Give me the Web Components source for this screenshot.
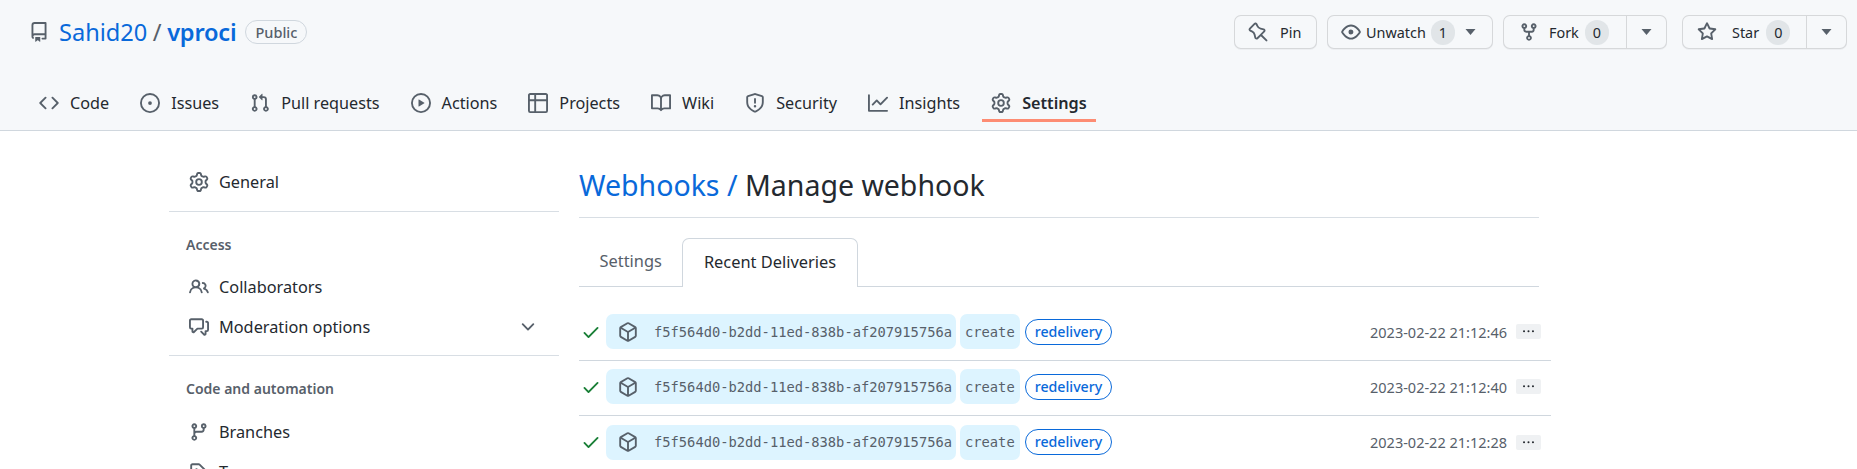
<!DOCTYPE html>
<html>
<head>
<meta charset="utf-8">
<title>Manage webhook</title>
<style>
  html, body { margin: 0; height: 469px; overflow: hidden; background: #fff; }
  body { font-family: "Noto Sans", "Open Sans", sans-serif; color: #24292f; }
</style>
</head>
<body>
<repo-header></repo-header>
<settings-page>
  <side-nav slot="side"></side-nav>
  <webhook-panel slot="main"></webhook-panel>
</settings-page>

<script>
(function() {
  const ICONS = {
    repo: 'M2 2.5A2.5 2.5 0 0 1 4.5 0h8.75a.75.75 0 0 1 .75.75v12.5a.75.75 0 0 1-.75.75h-2.5a.75.75 0 0 1 0-1.5h1.75v-2h-8a1 1 0 0 0-.714 1.7.75.75 0 1 1-1.072 1.05A2.495 2.495 0 0 1 2 11.5Zm10.5-1h-8a1 1 0 0 0-1 1v6.708A2.486 2.486 0 0 1 4.5 9h8ZM5 12.25a.25.25 0 0 1 .25-.25h3.5a.25.25 0 0 1 .25.25v3.25a.25.25 0 0 1-.4.2l-1.45-1.087a.249.249 0 0 0-.3 0L5.4 15.7a.25.25 0 0 1-.4-.2Z',
    code: 'm11.28 3.22 4.25 4.25a.75.75 0 0 1 0 1.06l-4.25 4.25a.749.749 0 0 1-1.275-.326.749.749 0 0 1 .215-.734L13.94 8l-3.72-3.72a.749.749 0 0 1 .326-1.275.749.749 0 0 1 .734.215Zm-6.56 0a.751.751 0 0 1 1.042.018.751.751 0 0 1 .018 1.042L2.06 8l3.72 3.72a.749.749 0 0 1-.326 1.275.749.749 0 0 1-.734-.215L.47 8.53a.75.75 0 0 1 0-1.06Z',
    issue: 'M8 9.5a1.5 1.5 0 1 0 0-3 1.5 1.5 0 0 0 0 3ZM8 0a8 8 0 1 1 0 16A8 8 0 0 1 8 0ZM1.5 8a6.5 6.5 0 1 0 13 0 6.5 6.5 0 0 0-13 0Z',
    pull: 'M1.5 3.25a2.25 2.25 0 1 1 3 2.122v5.256a2.251 2.251 0 1 1-1.5 0V5.372A2.25 2.25 0 0 1 1.5 3.25Zm5.677-.177L9.573.677A.25.25 0 0 1 10 .854V2.5h1A2.5 2.5 0 0 1 13.5 5v5.628a2.251 2.251 0 1 1-1.5 0V5a1 1 0 0 0-1-1h-1v1.646a.25.25 0 0 1-.427.177L7.177 3.427a.25.25 0 0 1 0-.354ZM3.75 2.5a.75.75 0 1 0 0 1.5.75.75 0 0 0 0-1.5Zm0 9.5a.75.75 0 1 0 0 1.5.75.75 0 0 0 0-1.5Zm8.25.75a.75.75 0 1 0 1.5 0 .75.75 0 0 0-1.5 0Z',
    play: 'M8 0a8 8 0 1 1 0 16A8 8 0 0 1 8 0ZM1.5 8a6.5 6.5 0 1 0 13 0 6.5 6.5 0 0 0-13 0Zm4.879-2.773 4.264 2.559a.25.25 0 0 1 0 .428l-4.264 2.559A.25.25 0 0 1 6 10.559V5.442a.25.25 0 0 1 .379-.215Z',
    table: 'M0 1.75C0 .784.784 0 1.75 0h12.5C15.216 0 16 .784 16 1.75v12.5A1.75 1.75 0 0 1 14.25 16H1.75A1.75 1.75 0 0 1 0 14.25ZM6.5 6.5v8h7.75a.25.25 0 0 0 .25-.25V6.5Zm8-1.5V1.75a.25.25 0 0 0-.25-.25H6.5V5Zm-13 1.5v7.75c0 .138.112.25.25.25H5v-8ZM5 5V1.5H1.75a.25.25 0 0 0-.25.25V5Z',
    book: 'M0 1.75A.75.75 0 0 1 .75 1h4.253c1.227 0 2.317.59 3 1.501A3.743 3.743 0 0 1 11.006 1h4.245a.75.75 0 0 1 .75.75v10.5a.75.75 0 0 1-.75.75h-4.507a2.25 2.25 0 0 0-1.591.659l-.622.621a.75.75 0 0 1-1.06 0l-.622-.621A2.25 2.25 0 0 0 5.258 13H.75a.75.75 0 0 1-.75-.75Zm7.251 10.324.004-5.073-.002-2.253A2.25 2.25 0 0 0 5.003 2.5H1.5v9h3.757a3.75 3.75 0 0 1 1.994.574ZM8.755 4.75l-.004 7.322a3.752 3.752 0 0 1 1.992-.572H14.5v-9h-3.495a2.25 2.25 0 0 0-2.25 2.25Z',
    shield: 'M7.467.133a1.748 1.748 0 0 1 1.066 0l5.25 1.68A1.75 1.75 0 0 1 15 3.48V7c0 1.566-.32 3.182-1.303 4.682-.983 1.498-2.585 2.813-5.032 3.855a1.697 1.697 0 0 1-1.33 0c-2.447-1.042-4.049-2.357-5.032-3.855C1.32 10.182 1 8.566 1 7V3.48a1.75 1.75 0 0 1 1.217-1.667Zm.61 1.429a.25.25 0 0 0-.153 0l-5.25 1.68a.25.25 0 0 0-.174.238V7c0 1.358.275 2.666 1.057 3.86.784 1.194 2.121 2.34 4.366 3.297a.196.196 0 0 0 .154 0c2.245-.956 3.582-2.104 4.366-3.298C13.225 9.666 13.5 8.36 13.5 7V3.48a.251.251 0 0 0-.174-.237l-5.25-1.68ZM8.75 4.75v3a.75.75 0 0 1-1.5 0v-3a.75.75 0 0 1 1.5 0ZM9 10.5a1 1 0 1 1-2 0 1 1 0 0 1 2 0Z',
    graph: 'M1.5 1.75V13.5h13.75a.75.75 0 0 1 0 1.5H.75a.75.75 0 0 1-.75-.75V1.75a.75.75 0 0 1 1.5 0Zm14.28 2.53-5.25 5.25a.75.75 0 0 1-1.06 0L7 7.06 4.28 9.78a.751.751 0 0 1-1.042-.018.751.751 0 0 1-.018-1.042l3.25-3.25a.75.75 0 0 1 1.06 0L10 7.94l4.72-4.72a.751.751 0 0 1 1.042.018.751.751 0 0 1 .018 1.042Z',
    gear: 'M8 0a8.2 8.2 0 0 1 .701.031C9.444.095 9.99.645 10.16 1.29l.288 1.107c.018.066.079.158.212.224.231.114.454.243.668.386.123.082.233.09.299.071l1.103-.303c.644-.176 1.392.021 1.82.63.27.385.506.792.704 1.218.315.675.111 1.422-.364 1.891l-.814.806c-.049.048-.098.147-.088.294.016.257.016.515 0 .772-.01.147.038.246.088.294l.814.806c.475.469.679 1.216.364 1.891a7.977 7.977 0 0 1-.704 1.217c-.428.61-1.176.807-1.82.63l-1.102-.302c-.067-.019-.177-.011-.3.071a5.909 5.909 0 0 1-.668.386c-.133.066-.194.158-.211.224l-.29 1.106c-.168.646-.715 1.196-1.458 1.26a8.006 8.006 0 0 1-1.402 0c-.743-.064-1.289-.614-1.458-1.26l-.289-1.106c-.018-.066-.079-.158-.212-.224a5.738 5.738 0 0 1-.668-.386c-.123-.082-.233-.09-.299-.071l-1.103.303c-.644.176-1.392-.021-1.82-.63a8.12 8.12 0 0 1-.704-1.218c-.315-.675-.111-1.422.363-1.891l.815-.806c.05-.048.098-.147.088-.294a6.214 6.214 0 0 1 0-.772c.01-.147-.038-.246-.088-.294l-.815-.806C.635 6.045.431 5.298.746 4.623a7.92 7.92 0 0 1 .704-1.217c.428-.61 1.176-.807 1.82-.63l1.102.302c.067.019.177.011.3-.071.214-.143.437-.272.668-.386.133-.066.194-.158.211-.224l.29-1.106C6.009.645 6.556.095 7.299.03 7.53.01 7.764 0 8 0Zm-.571 1.525c-.036.003-.108.036-.137.146l-.289 1.105c-.147.561-.549.967-.998 1.189-.173.086-.34.183-.5.29-.417.278-.97.423-1.529.27l-1.103-.303c-.109-.03-.175.016-.195.045-.22.312-.412.644-.573.99-.014.031-.021.11.059.19l.815.806c.411.406.562.957.53 1.456a4.709 4.709 0 0 0 0 .582c.032.499-.119 1.05-.53 1.456l-.815.806c-.081.08-.073.159-.059.19.162.346.353.677.573.989.02.03.085.076.195.046l1.102-.303c.56-.153 1.113-.008 1.53.27.161.107.328.204.501.29.447.222.85.629.997 1.189l.289 1.105c.029.109.101.143.137.146a6.6 6.6 0 0 0 1.142 0c.036-.003.108-.036.137-.146l.289-1.105c.147-.561.549-.967.998-1.189.173-.086.34-.183.5-.29.417-.278.97-.423 1.529-.27l1.103.303c.109.029.175-.016.195-.045.22-.313.411-.644.573-.99.014-.031.021-.11-.059-.19l-.815-.806c-.411-.406-.562-.957-.53-1.456a4.709 4.709 0 0 0 0-.582c-.032-.499.119-1.05.53-1.456l.815-.806c.081-.08.073-.159.059-.19a6.464 6.464 0 0 0-.573-.989c-.02-.03-.085-.076-.195-.046l-1.102.303c-.56.153-1.113.008-1.53-.27a4.44 4.44 0 0 0-.501-.29c-.447-.222-.85-.629-.997-1.189l-.289-1.105c-.029-.11-.101-.143-.137-.146a6.6 6.6 0 0 0-1.142 0ZM11 8a3 3 0 1 1-6 0 3 3 0 0 1 6 0ZM9.5 8a1.5 1.5 0 1 0-3.001.001A1.5 1.5 0 0 0 9.5 8Z',
    pin: 'm11.294.984 3.722 3.722a1.75 1.75 0 0 1-.504 2.826l-1.327.613a3.089 3.089 0 0 0-1.707 2.084l-.584 2.454c-.317 1.332-1.972 1.8-2.94.832L5.75 11.311 1.78 15.28a.749.749 0 0 1-1.275-.326.749.749 0 0 1 .215-.734l3.97-3.97-2.204-2.204c-.968-.968-.5-2.623.832-2.94l2.454-.584a3.08 3.08 0 0 0 2.084-1.707l.613-1.327a1.75 1.75 0 0 1 2.826-.504ZM6.283 9.723l2.732 2.731a.25.25 0 0 0 .42-.119l.584-2.454a4.586 4.586 0 0 1 2.537-3.098l1.328-.613a.25.25 0 0 0 .072-.404l-3.722-3.722a.25.25 0 0 0-.404.072l-.613 1.328a4.584 4.584 0 0 1-3.098 2.537l-2.454.584a.25.25 0 0 0-.119.42l2.731 2.732Z',
    eye: 'M8 2c1.981 0 3.671.992 4.933 2.078 1.27 1.091 2.187 2.345 2.637 3.023a1.62 1.62 0 0 1 0 1.798c-.45.678-1.367 1.932-2.637 3.023C11.67 13.008 9.981 14 8 14c-1.981 0-3.671-.992-4.933-2.078C1.797 10.83.88 9.576.43 8.898a1.62 1.62 0 0 1 0-1.798c.45-.677 1.367-1.931 2.637-3.022C4.33 2.992 6.019 2 8 2ZM1.679 7.932a.12.12 0 0 0 0 .136c.411.622 1.241 1.75 2.366 2.717C5.176 11.758 6.527 12.5 8 12.5c1.473 0 2.825-.742 3.955-1.715 1.124-.967 1.954-2.096 2.366-2.717a.12.12 0 0 0 0-.136c-.412-.621-1.242-1.75-2.366-2.717C10.824 4.242 9.473 3.5 8 3.5c-1.473 0-2.825.742-3.955 1.715-1.124.967-1.954 2.096-2.366 2.717ZM8 10a2 2 0 1 1-.001-3.999A2 2 0 0 1 8 10Z',
    fork: 'M5 5.372v.878c0 .414.336.75.75.75h4.5a.75.75 0 0 0 .75-.75v-.878a2.25 2.25 0 1 1 1.5 0v.878a2.25 2.25 0 0 1-2.25 2.25h-1.5v2.128a2.251 2.251 0 1 1-1.5 0V8.5h-1.5A2.25 2.25 0 0 1 3.5 6.25v-.878a2.25 2.25 0 1 1 1.5 0ZM5 3.25a.75.75 0 1 0-1.5 0 .75.75 0 0 0 1.5 0Zm6.75.75a.75.75 0 1 0 0-1.5.75.75 0 0 0 0 1.5Zm-3 8.75a.75.75 0 1 0-1.5 0 .75.75 0 0 0 1.5 0Z',
    star: 'M8 .25a.75.75 0 0 1 .673.418l1.882 3.815 4.21.612a.75.75 0 0 1 .416 1.279l-3.046 2.97.719 4.192a.751.751 0 0 1-1.088.791L8 12.347l-3.766 1.98a.75.75 0 0 1-1.088-.79l.72-4.194L.818 6.374a.75.75 0 0 1 .416-1.28l4.21-.611L7.327.668A.75.75 0 0 1 8 .25Zm0 2.445L6.615 5.5a.75.75 0 0 1-.564.41l-3.097.45 2.24 2.184a.75.75 0 0 1 .216.664l-.528 3.084 2.769-1.456a.75.75 0 0 1 .698 0l2.77 1.456-.53-3.084a.75.75 0 0 1 .216-.664l2.24-2.183-3.096-.45a.75.75 0 0 1-.564-.41L8 2.694Z',
    people: 'M2 5.5a3.5 3.5 0 1 1 5.898 2.549 5.508 5.508 0 0 1 3.034 4.084.75.75 0 1 1-1.482.235 4 4 0 0 0-7.9 0 .75.75 0 0 1-1.482-.236A5.507 5.507 0 0 1 3.102 8.05 3.493 3.493 0 0 1 2 5.5ZM11 4a3.001 3.001 0 0 1 2.22 5.018 5.01 5.01 0 0 1 2.56 3.012.749.749 0 0 1-.885.954.752.752 0 0 1-.549-.514 3.507 3.507 0 0 0-2.522-2.372.75.75 0 0 1-.574-.73v-.352a.75.75 0 0 1 .416-.672A1.5 1.5 0 0 0 11 5.5.75.75 0 0 1 11 4Zm-5.5-.5a2 2 0 1 0-.001 3.999A2 2 0 0 0 5.5 3.5Z',
    comments: 'M1.75 1h8.5c.966 0 1.75.784 1.75 1.75v5.5A1.75 1.75 0 0 1 10.25 10H7.061l-2.574 2.573A1.458 1.458 0 0 1 2 11.543V10h-.25A1.75 1.75 0 0 1 0 8.25v-5.5C0 1.784.784 1 1.75 1ZM1.5 2.75v5.5c0 .138.112.25.25.25h1a.75.75 0 0 1 .75.75v2.19l2.72-2.72a.749.749 0 0 1 .53-.22h3.5a.25.25 0 0 0 .25-.25v-5.5a.25.25 0 0 0-.25-.25h-8.5a.25.25 0 0 0-.25.25Zm13 2a.25.25 0 0 0-.25-.25h-.5a.75.75 0 0 1 0-1.5h.5c.966 0 1.75.784 1.75 1.75v5.5A1.75 1.75 0 0 1 14.25 12H14v1.543a1.458 1.458 0 0 1-2.487 1.03L9.22 12.28a.749.749 0 0 1 .326-1.275.749.749 0 0 1 .734.215l2.22 2.22v-2.19a.75.75 0 0 1 .75-.75h1a.25.25 0 0 0 .25-.25Z',
    chevron: 'M12.78 5.22a.749.749 0 0 1 0 1.06l-4.25 4.25a.749.749 0 0 1-1.06 0L3.22 6.28a.749.749 0 1 1 1.06-1.06L8 8.939l3.72-3.719a.749.749 0 0 1 1.06 0Z',
    branch: 'M9.5 3.25a2.25 2.25 0 1 1 3 2.122V6A2.5 2.5 0 0 1 10 8.5H6a1 1 0 0 0-1 1v1.128a2.251 2.251 0 1 1-1.5 0V5.372a2.251 2.251 0 1 1 1.5 0v1.836A2.493 2.493 0 0 1 6 7h4a1 1 0 0 0 1-1v-.628A2.25 2.25 0 0 1 9.5 3.25Zm-6 0a.75.75 0 1 0 1.5 0 .75.75 0 0 0-1.5 0Zm8.25-.75a.75.75 0 1 0 0 1.5.75.75 0 0 0 0-1.5ZM4.25 12a.75.75 0 1 0 0 1.5.75.75 0 0 0 0-1.5Z',
    tag: 'M1 7.775V2.75C1 1.784 1.784 1 2.75 1h5.025c.464 0 .91.184 1.238.513l6.25 6.25a1.75 1.75 0 0 1 0 2.474l-5.026 5.026a1.75 1.75 0 0 1-2.474 0l-6.25-6.25A1.752 1.752 0 0 1 1 7.775Zm1.5 0c0 .066.026.13.073.177l6.25 6.25a.25.25 0 0 0 .354 0l5.025-5.025a.25.25 0 0 0 0-.354l-6.25-6.25a.25.25 0 0 0-.177-.073H2.75a.25.25 0 0 0-.25.25ZM6 5a1 1 0 1 1 0 2 1 1 0 0 1 0-2Z',
    check: 'M13.78 4.22a.75.75 0 0 1 0 1.06l-7.25 7.25a.75.75 0 0 1-1.06 0L2.22 9.28a.751.751 0 0 1 .018-1.042.751.751 0 0 1 1.042-.018L6 10.94l6.72-6.72a.75.75 0 0 1 1.06 0Z',
    box: 'm8.878.392 5.25 3.045c.54.314.872.89.872 1.514v6.098a1.75 1.75 0 0 1-.872 1.514l-5.25 3.045a1.75 1.75 0 0 1-1.756 0l-5.25-3.045A1.75 1.75 0 0 1 1 11.049V4.951c0-.624.332-1.201.872-1.514L7.122.392a1.75 1.75 0 0 1 1.756 0ZM7.875 1.69l-4.63 2.685L8 7.133l4.755-2.758-4.63-2.685a.248.248 0 0 0-.25 0ZM2.5 5.677v5.372c0 .09.047.171.125.216l4.625 2.683V8.432Zm6.25 8.271 4.625-2.683a.25.25 0 0 0 .125-.216V5.677L8.75 8.432Z',
    kebab: 'M8 9a1.5 1.5 0 1 0 0-3 1.5 1.5 0 0 0 0 3ZM1.5 9a1.5 1.5 0 1 0 0-3 1.5 1.5 0 0 0 0 3Zm13 0a1.5 1.5 0 1 0 0-3 1.5 1.5 0 0 0 0 3Z'
  };

  class GhIcon extends HTMLElement {
    connectedCallback() {
      const size = this.getAttribute('size') || 20;
      const flip = this.hasAttribute('flip') ? 'transform:scaleX(-1);' : '';
      this.attachShadow({ mode: 'open' }).innerHTML = `
        <style>:host { display: inline-flex; flex: none; color: var(--icon-color, #57606a); }</style>
        <svg width="${size}" height="${size}" viewBox="0 0 16 16" fill="currentColor" style="${flip}">
          <path fill-rule="evenodd" d="${ICONS[this.getAttribute('name')]}"></path>
        </svg>`;
    }
  }
  customElements.define('gh-icon', GhIcon);

  // Small down triangle used in the header buttons
  const CARET = `<svg width="11" height="6" viewBox="0 0 10 6" fill="#57606a"><path d="M0 0h10L5 6z"/></svg>`;

  class GhButton extends HTMLElement {
    connectedCallback() {
      const icon = this.getAttribute('icon');
      const label = this.getAttribute('label');
      const count = this.getAttribute('count');
      const caret = this.getAttribute('caret');
      const flip = this.hasAttribute('flip') ? 'flip' : '';
      this.attachShadow({ mode: 'open' }).innerHTML = `
        <style>
          :host { display: flex; height: 34px; box-sizing: border-box; border: 1px solid rgba(31,35,40,.15);
            border-radius: 7px; background: #f6f8fa; font-size: 14.4px; color: #24292f; box-shadow: 0 1px 0 rgba(31,35,40,.04); }
          .main { display: flex; align-items: center; flex: 1; padding: 0 var(--pad-r, 14px) 0 var(--pad-l, 14px); gap: var(--gap, 14px); }
          .count { background: rgba(175,184,193,.3); border-radius: 14px; padding: 0 8px; height: 25px; line-height: 25px; font-size: 14.4px; margin-left: var(--count-ml, -7px); }
          .caret { display: flex; align-items: center; justify-content: center; width: 39px; border-left: 1px solid rgba(31,35,40,.15); }
          .inline { margin-left: 5px; display: flex; }
        </style>
        <div class="main">
          <gh-icon name="${icon}" ${flip}></gh-icon>
          <span>${label}</span>
          ${count ? `<span class="count">${count}</span>` : ''}
          ${caret === 'inline' ? `<span class="inline">${CARET}</span>` : ''}
        </div>
        ${caret === 'split' ? `<div class="caret">${CARET}</div>` : ''}`;
    }
  }
  customElements.define('gh-button', GhButton);

  class NavTab extends HTMLElement {
    connectedCallback() {
      const selected = this.hasAttribute('selected');
      this.attachShadow({ mode: 'open' }).innerHTML = `
        <style>
          :host { display: flex; align-items: center; gap: 11px; padding: 3px 9px 0; height: 39px; position: relative;
            font-size: 16.2px; color: #24292f; margin-bottom: -1px; box-sizing: border-box;
            border-bottom: 3px solid ${selected ? '#fd8c73' : 'transparent'}; font-weight: ${selected ? 600 : 400}; }
        </style>
        <gh-icon name="${this.getAttribute('icon')}"></gh-icon>
        <span>${this.getAttribute('label')}</span>`;
    }
  }
  customElements.define('nav-tab', NavTab);

  const headTmpl = document.createElement('template');
  headTmpl.innerHTML = `
    <style>
      :host { display: block; height: 131px; box-sizing: border-box; background: #f6f8fa; border-bottom: 1px solid #d0d7de; }
      .top { display: flex; align-items: center; justify-content: space-between; padding: 15px 10px 0 29px; height: 34px; }
      .title { display: flex; align-items: center; font-size: 23.6px; color: #0969da; }
      .title gh-icon { margin-right: 10px; }
      .sep { color: #57606a; margin: 0 5.5px; }
      .name { font-weight: 600; letter-spacing: -.2px; }
      .badge { margin-left: 9px; font-size: 14.5px; font-weight: 500; color: #57606a; border: 1px solid #d0d7de; border-radius: 14px; padding: 0 9px; height: 24px; line-height: 22px; box-sizing: border-box; }
      .actions { display: flex; }
      .tabs { display: flex; gap: 13.1px; padding: 34px 0 0 30px; }
      #pin { width: 83px; margin-right: 10px; --gap: 12px; --pad-l: 13px; }
      #watch { width: 166px; margin-right: 10px; --gap: 5px; --pad-l: 13px; --pad-r: 12px; --count-ml: 0px; }
      #fork { width: 164px; margin-right: 15px; --gap: 10px; --pad-l: 15px; --count-ml: -4px; }
      #star { width: 165px; --gap: 15px; --pad-l: 14px; --count-ml: -8px; }
    </style>
    <div class="top">
      <div class="title">
        <gh-icon name="repo"></gh-icon>
        <span>Sahid20</span><span class="sep">/</span><span class="name">vproci</span>
        <span class="badge">Public</span>
      </div>
      <div class="actions">
        <gh-button id="pin" icon="pin" label="Pin" flip></gh-button>
        <gh-button id="watch" icon="eye" label="Unwatch" count="1" caret="inline"></gh-button>
        <gh-button id="fork" icon="fork" label="Fork" count="0" caret="split"></gh-button>
        <gh-button id="star" icon="star" label="Star" count="0" caret="split"></gh-button>
      </div>
    </div>
    <nav class="tabs">
      <nav-tab icon="code" label="Code"></nav-tab>
      <nav-tab icon="issue" label="Issues"></nav-tab>
      <nav-tab icon="pull" label="Pull requests"></nav-tab>
      <nav-tab icon="play" label="Actions"></nav-tab>
      <nav-tab icon="table" label="Projects"></nav-tab>
      <nav-tab icon="book" label="Wiki"></nav-tab>
      <nav-tab icon="shield" label="Security"></nav-tab>
      <nav-tab icon="graph" label="Insights"></nav-tab>
      <nav-tab icon="gear" label="Settings" selected></nav-tab>
    </nav>`;

  class RepoHeader extends HTMLElement {
    constructor() {
      super();
      this.attachShadow({ mode: 'open' }).appendChild(headTmpl.content.cloneNode(true));
    }
  }
  customElements.define('repo-header', RepoHeader);

  class SettingsPage extends HTMLElement {
    constructor() {
      super();
      this.attachShadow({ mode: 'open' }).innerHTML = `
        <style>
          :host { display: flex; gap: 20px; padding: 0 0 0 169px; }
          .side { width: 390px; flex: none; padding-top: 31px; }
          .main { width: 960px; flex: none; padding-top: 35px; }
        </style>
        <div class="side"><slot name="side"></slot></div>
        <div class="main"><slot name="main"></slot></div>`;
    }
  }
  customElements.define('settings-page', SettingsPage);

  class SideItem extends HTMLElement {
    connectedCallback() {
      this.attachShadow({ mode: 'open' }).innerHTML = `
        <style>
          :host { display: flex; align-items: center; gap: 10px; height: 40px; padding-left: 20px; padding-right: 21px;
            font-size: 16.3px; color: #24292f; }
          .label { flex: 1; }
        </style>
        <gh-icon name="${this.getAttribute('icon')}"></gh-icon>
        <span class="label">${this.getAttribute('label')}</span>
        ${this.hasAttribute('expand') ? '<gh-icon name="chevron"></gh-icon>' : ''}`;
    }
  }
  customElements.define('side-item', SideItem);

  const sideTmpl = document.createElement('template');
  sideTmpl.innerHTML = `
    <style>
      :host { display: block; }
      hr { border: 0; height: 1px; background: #d8dee4; margin: 0; }
      .head { font-size: 14px; font-weight: 600; color: #57606a; padding-left: 17px; line-height: 20px; }
      .general { margin-bottom: 9px; }
      .mod { margin-bottom: 8px; }
      .access { margin: 23px 0 12px; }
      .auto { margin: 23px 0 13px; }
    </style>
    <side-item class="general" icon="gear" label="General"></side-item>
    <hr>
    <div class="head access">Access</div>
    <side-item icon="people" label="Collaborators"></side-item>
    <side-item class="mod" icon="comments" label="Moderation options" expand></side-item>
    <hr>
    <div class="head auto">Code and automation</div>
    <side-item icon="branch" label="Branches"></side-item>
    <side-item icon="tag" label="Tags"></side-item>`;

  class SideNav extends HTMLElement {
    constructor() {
      super();
      this.attachShadow({ mode: 'open' }).appendChild(sideTmpl.content.cloneNode(true));
    }
  }
  customElements.define('side-nav', SideNav);

  class DeliveryRow extends HTMLElement {
    connectedCallback() {
      this.attachShadow({ mode: 'open' }).innerHTML = `
        <style>
          :host { display: flex; align-items: center; height: 55px; box-sizing: border-box; padding: 0 10px 3px 2px;
            margin-right: -12px; border-bottom: 1px solid #d0d7de; --icon-color: #57606a; }
          :host(:last-child) { border-bottom: 0; }
          .ok { --icon-color: #1a7f37; margin-right: 5px; }
          .pill { display: flex; align-items: center; background: #ddf4ff; border-radius: 7px; height: 35px; margin-right: 4px;
            padding: 0 5px; font-family: "DejaVu Sans Mono", monospace; font-size: 13.75px; color: #57606a; white-space: nowrap; }
          .guid { width: 350px; box-sizing: border-box; padding: 0 4px 0 12px; }
          .guid span { margin-left: 16px; }
          .event { padding: 0 5px; }
          .label { font-size: 14.2px; font-weight: 500; color: #0969da; border: 1px solid #0969da; border-radius: 14px; padding: 0 9px; height: 26px; line-height: 24px; box-sizing: border-box; margin-left: 1px; }
          .time { margin-left: auto; font-size: 14.5px; color: #57606a; margin-right: 9px; }
          .more { display: flex; align-items: center; justify-content: center; width: 25px; height: 15px; background: #eff1f3; border-radius: 2px; --icon-color: #24292f; }
        </style>
        <gh-icon class="ok" name="check"></gh-icon>
        <div class="pill guid"><gh-icon name="box" size="20"></gh-icon><span>${this.getAttribute('guid')}</span></div>
        <div class="pill event">${this.getAttribute('event')}</div>
        <span class="label">redelivery</span>
        <span class="time">${this.getAttribute('time')}</span>
        <div class="more"><gh-icon name="kebab" size="11"></gh-icon></div>`;
    }
  }
  customElements.define('delivery-row', DeliveryRow);

  const panelTmpl = document.createElement('template');
  panelTmpl.innerHTML = `
    <style>
      :host { display: block; }
      h2 { margin: 0; font-size: 28.5px; font-weight: 400; line-height: 38px; padding-bottom: 13px; border-bottom: 1px solid #d8dee4; color: #24292f; }
      h2 a { color: #0969da; }
      .tabs { display: flex; align-items: flex-end; margin-top: 19px; height: 49px; border-bottom: 1px solid #d0d7de; font-size: 16.4px; }
      .tab { padding: 0 20.5px; height: 48px; line-height: 46px; color: #57606a; }
      .tab.on { color: #24292f; background: #fff; border: 1px solid #d0d7de; border-bottom: 0; border-radius: 7px 7px 0 0; margin-bottom: -1px; height: 49px; box-sizing: border-box; }
      .list { margin-top: 19px; }
    </style>
    <h2><a>Webhooks /</a> Manage webhook</h2>
    <div class="tabs">
      <div class="tab">Settings</div>
      <div class="tab on">Recent Deliveries</div>
    </div>
    <div class="list">
      <delivery-row guid="f5f564d0-b2dd-11ed-838b-af207915756a" event="create" time="2023-02-22 21:12:46"></delivery-row>
      <delivery-row guid="f5f564d0-b2dd-11ed-838b-af207915756a" event="create" time="2023-02-22 21:12:40"></delivery-row>
      <delivery-row guid="f5f564d0-b2dd-11ed-838b-af207915756a" event="create" time="2023-02-22 21:12:28"></delivery-row>
    </div>`;

  class WebhookPanel extends HTMLElement {
    constructor() {
      super();
      this.attachShadow({ mode: 'open' }).appendChild(panelTmpl.content.cloneNode(true));
    }
  }
  customElements.define('webhook-panel', WebhookPanel);
})();
</script>
</body>
</html>
